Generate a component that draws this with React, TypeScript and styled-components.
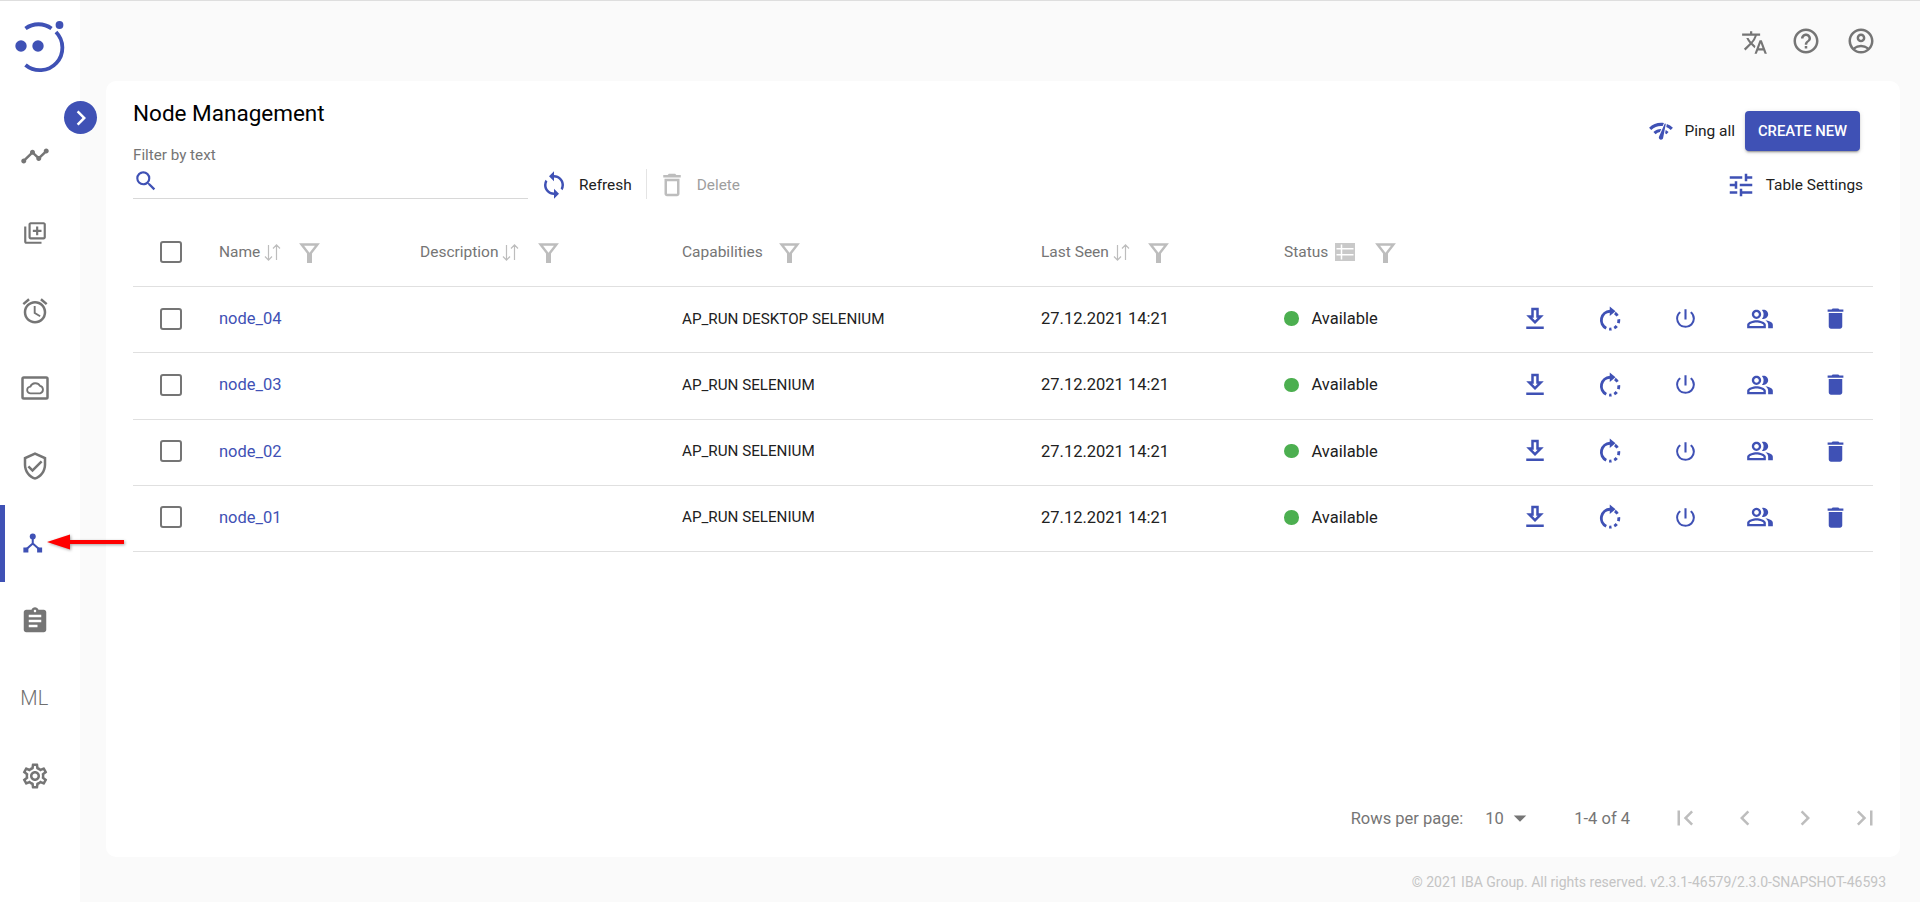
import React from "react";
import styled, { createGlobalStyle, css } from "styled-components";
import {
  MdTranslate, MdHelpOutline, MdOutlineAccountCircle, MdTimeline, MdOutlineLibraryAdd, MdAccessAlarm,
  MdOutlineVerifiedUser, MdAssignment, MdOutlineSettings, MdChevronRight, MdChevronLeft,
  MdFirstPage, MdLastPage, MdSearch, MdSync, MdDeleteOutline, MdNetworkCheck, MdTune,
  MdPowerSettingsNew, MdOutlinePeopleAlt, MdDelete, MdArrowDropDown,
} from "react-icons/md";

const BLUE = "#3f51b5";
const GREY = "#757575";
const LIGHT = "#bdbdbd";
const COLUMNS = "86px 201px 262px 359px 243px 213.5px repeat(5, 75px)";

const Global = createGlobalStyle`
  html, body { margin: 0; padding: 0; background: #fafafa; }
  body { font-family: Roboto, "Liberation Sans", sans-serif; color: #212121; }
  * { box-sizing: border-box; }
`;

const Page = styled.div`
  display: flex; width: 1920px; height: 902px; border-top: 1px solid #dedede; overflow: hidden; background: #fafafa;
`;
const Sidebar = styled.aside`
  position: relative; flex: 0 0 80px; background: #fff; display: flex; flex-direction: column;
`;
const LogoBox = styled.div`
  height: 116px; padding: 10px 0 0 0; display: block;
`;
const ExpandButton = styled.button`
  position: absolute; left: 64px; top: 100px; width: 33px; height: 33px; border: 0; padding: 0; border-radius: 50%;
  background: ${BLUE}; color: #fff; display: flex; align-items: center; justify-content: center; font-size: 30px; z-index: 2;
`;
const NavItem = styled.div<{ $active?: boolean; $size?: number }>`
  position: relative; height: 77.5px; display: flex; align-items: center; justify-content: center; padding-right: 10px;
  color: ${GREY}; font-size: ${(p) => p.$size ?? 30}px;
  ${(p) => p.$active && css`
    color: ${BLUE};
    &::before { content: ""; position: absolute; left: 0; top: 0; bottom: 0; width: 5px; background: ${BLUE}; }
  `}
`;
const NavText = styled.span`
  font-size: 20px; font-weight: 300; line-height: 1; color: #6f6f6f; letter-spacing: 0.3px; margin-right: 1px;
`;
const ArrowMark = styled.svg`
  position: absolute; left: 45px; top: 529px; width: 84px; height: 24px; filter: drop-shadow(1px 1px 1.5px rgba(0,0,0,.35));
`;
const Main = styled.main`
  flex: 1; display: flex; flex-direction: column; min-width: 0;
`;
const TopBar = styled.header`
  height: 80px; display: flex; align-items: center; justify-content: flex-end; padding: 0 44px 0 0; gap: 25px;
  color: ${GREY}; font-size: 30px;
`;
const TranslateIcon = styled(MdTranslate)`
  font-size: 27px; margin-right: -2px; margin-top: 2px;
`;
const Card = styled.section`
  margin: 0 20px 0 26px; height: 776px; background: #fff; border-radius: 10px; padding: 0 27px;
  display: flex; flex-direction: column;
`;
const Toolbar = styled.div`
  height: 135px; display: flex; justify-content: space-between; margin-right: 10px;
`;
const ToolLeft = styled.div`
  display: flex; flex-direction: column;
`;
const Title = styled.h1`
  margin: 16px 0 0; font-size: 22.5px; line-height: 32px; font-weight: 400; color: #000;
`;
const FilterRow = styled.div`
  display: flex; align-items: flex-end; margin-top: 18px;
`;
const FilterField = styled.div`
  width: 395px; display: flex; flex-direction: column;
`;
const FilterLabel = styled.label`
  font-size: 15.2px; line-height: 16px; color: ${GREY};
`;
const SearchLine = styled.div`
  height: 36px; border-bottom: 1px solid #d8d8d8; display: flex; align-items: center; color: ${BLUE}; font-size: 26px;
`;
const ToolButton = styled.div<{ $disabled?: boolean }>`
  display: flex; align-items: center; height: 28px; gap: 10px; font-size: 15.4px;
  color: ${(p) => (p.$disabled ? "#9e9e9e" : "#212121")};
  svg { font-size: 30px; flex: none; color: ${(p) => (p.$disabled ? LIGHT : BLUE)}; }
`;
const ToolDivider = styled.div`
  width: 1px; height: 30px; background: #e4e4e4; margin: 0 10px 0 14px; align-self: flex-end;
`;
const RefreshSlot = styled.div`
  margin-left: 11px;
`;
const ToolRight = styled.div`
  display: flex; flex-direction: column; align-items: flex-end;
`;
const PingRow = styled.div`
  display: flex; align-items: center; margin-top: 30px; height: 40px; margin-right: 3px; font-size: 15.5px;
`;
const PingLabel = styled.div`
  display: flex; align-items: center; gap: 10px;
  svg { font-size: 26px; color: ${BLUE}; }
`;
const CreateButton = styled.button`
  margin-left: 10px; width: 115px; height: 40px; border: 0; border-radius: 4px; background: ${BLUE}; color: #fff;
  font: 500 14.8px Roboto, sans-serif; text-transform: uppercase; padding: 0;
  box-shadow: 0 3px 1px -2px rgba(0,0,0,.2), 0 2px 2px 0 rgba(0,0,0,.14), 0 1px 5px 0 rgba(0,0,0,.12);
`;
const SettingsButton = styled(ToolButton)`
  margin-top: 20px;
`;
const Row = styled.div<{ $head?: boolean }>`
  display: grid; grid-template-columns: ${COLUMNS}; align-items: center; border-bottom: 1px solid #e0e0e0;
  height: ${(p) => (p.$head ? "71px" : "66.25px")};
  padding: ${(p) => (p.$head ? "2px 0 0" : "0 0 2px")};
  font-size: 16.5px; color: #212121;
`;
const CheckCell = styled.div`
  display: flex; padding-left: 27px;
`;
const Check = styled.span`
  width: 22px; height: 22px; border: 2.5px solid ${GREY}; border-radius: 3px; display: block;
`;
const HeadCell = styled.div`
  display: flex; align-items: center; color: ${GREY}; font-size: 15.5px;
`;
const SortIcon = styled.svg`
  width: 21px; height: 21px; margin-left: 2px; color: ${LIGHT};
`;
const ColumnsIcon = styled.svg`
  width: 20px; height: 18px; margin-left: 7px;
`;
const FilterIcon = styled.svg<{ $gap: number }>`
  width: 25px; height: 25px; margin-left: ${(p) => p.$gap}px; color: ${LIGHT};
`;
const NodeLink = styled.a`
  color: ${BLUE};
`;
const Capability = styled.div`
  font-size: 15.2px;
`;
const StatusCell = styled.div`
  display: flex; align-items: center; gap: 13px;
`;
const Dot = styled.span`
  width: 14.5px; height: 14.5px; border-radius: 50%; background: #4caf50;
`;
const ActionCell = styled.div<{ $size?: number }>`
  display: flex; justify-content: center; align-items: center; height: 30px; color: ${BLUE}; font-size: ${(p) => p.$size ?? 30}px;
`;
const Pagination = styled.div`
  margin-top: auto; height: 78px; margin-right: -22px; display: flex; align-items: center; justify-content: flex-end;
  font-size: 16.5px; color: ${GREY};
`;
const PerPage = styled.div`
  display: flex; align-items: center; margin-right: 39.5px;
  svg { font-size: 30px; }
`;
const PerPageValue = styled.span`
  margin: 0 1px 0 22px;
`;
const RangeText = styled.span`
  margin-right: 25px;
`;
const PageButton = styled.span`
  width: 60px; display: flex; justify-content: center; color: ${LIGHT}; font-size: 30px;
`;
const Footer = styled.footer`
  flex: 1; display: flex; justify-content: flex-end; align-items: center; padding: 4px 34px 0 0;
  font-size: 14px; color: #c4c4c4;
`;

const Logo = () => (
  <svg width="80" height="70" viewBox="0 0 80 70" fill="#3f51b5">
    <circle cx="21" cy="35" r="5.7" />
    <circle cx="38" cy="35" r="5.7" />
    <circle cx="59.5" cy="14" r="3.9" />
    <path d="M25.5 17.5 A22 22 0 0 1 51.5 17.5" fill="none" stroke="#3f51b5" strokeWidth="3.8" />
    <path d="M56 21 A22.5 22.5 0 0 1 25.5 54" fill="none" stroke="#3f51b5" strokeWidth="3.8" />
  </svg>
);

const CloudFrameIcon = () => (
  <svg width="30" height="30" viewBox="0 0 24 24" fill="none" stroke="currentColor">
    <rect x="2" y="3.6" width="20" height="16.8" rx="1" strokeWidth="2" />
    <path d="M8.6 16.3a2.7 2.7 0 0 1-.3-5.4A4.3 4.3 0 0 1 16 10.3a3.1 3.1 0 0 1 .1 6Z" strokeWidth="1.5" />
  </svg>
);

const NodeIcon = () => (
  <svg width="30" height="30" viewBox="0 0 24 24" fill="currentColor">
    <circle cx="10.2" cy="6.8" r="2.4" />
    <rect x="2.7" y="15.6" width="4" height="4" />
    <rect x="13.7" y="15.6" width="4" height="4" />
    <path d="M10.2 8.5V12.4L5 17M10.2 12.4L15.4 17" fill="none" stroke="currentColor" strokeWidth="1.6" />
  </svg>
);

const DownloadIcon = () => (
  <svg width="30" height="30" viewBox="0 0 24 24" fill="currentColor">
    <path d="M13 5v6h1.17L12 13.17 9.83 11H11V5h2m2-2H9v6H5l7 7 7-7h-4V3zm4 15H5v2h14v-2z" />
  </svg>
);

const RebootIcon = () => (
  <svg width="30" height="30" viewBox="0 0 24 24" fill="none" stroke="currentColor" strokeWidth="2.3">
    <path d="M12 5.8A7.2 7.2 0 0 0 9 19.4" />
    <path d="M11.8 2L16.4 5.8 11.8 9.6Z" fill="currentColor" stroke="none" />
    <path d="M15.9 7.2A7.2 7.2 0 0 1 18 9.4M19 12.2A7.2 7.2 0 0 1 18.7 15.3M17.4 17.6A7.2 7.2 0 0 1 15.4 19.3M13.2 20A7.2 7.2 0 0 1 11.3 20.1" />
  </svg>
);

const Sort = () => (
  <SortIcon viewBox="0 0 21 21" fill="none" stroke="currentColor" strokeWidth="1.2">
    <path d="M6.5 3V18M3 14.5L6.5 18.2 10 14.5M14.5 18V3M11 6.5L14.5 2.8 18 6.5" />
  </SortIcon>
);

const Funnel = ({ gap }: { gap: number }) => (
  <FilterIcon $gap={gap} viewBox="0 0 24 24" fill="currentColor">
    <path fillRule="evenodd" d="M2 3H22L14.4 13V22H9.6V13ZM6.8 5.4L12 12.2 17.2 5.4Z" />
  </FilterIcon>
);

const Columns = () => (
  <ColumnsIcon viewBox="0 0 20 18">
    <rect width="20" height="18" fill="#c9c9c9" />
    <path d="M1.5 5.8H18.5M1.5 11.8H18.5M6.5 1.5V16.5" fill="none" stroke="#fff" strokeWidth="1.5" />
  </ColumnsIcon>
);

const rows = [
  { name: "node_04", caps: "AP_RUN DESKTOP SELENIUM" },
  { name: "node_03", caps: "AP_RUN SELENIUM" },
  { name: "node_02", caps: "AP_RUN SELENIUM" },
  { name: "node_01", caps: "AP_RUN SELENIUM" },
];

export default function App() {
  return (
    <>
      <Global />
      <Page>
        <Sidebar>
          <LogoBox><Logo /></LogoBox>
          <ExpandButton aria-label="Expand"><MdChevronRight /></ExpandButton>
          <NavItem><MdTimeline /></NavItem>
          <NavItem $size={26}><MdOutlineLibraryAdd /></NavItem>
          <NavItem><MdAccessAlarm /></NavItem>
          <NavItem><CloudFrameIcon /></NavItem>
          <NavItem><MdOutlineVerifiedUser /></NavItem>
          <NavItem $active><NodeIcon /></NavItem>
          <NavItem><MdAssignment /></NavItem>
          <NavItem><NavText>ML</NavText></NavItem>
          <NavItem><MdOutlineSettings /></NavItem>
          <ArrowMark viewBox="0 0 84 24">
            <path d="M2 12L25 4.5V10H79V14H25V19.5Z" fill="#ff0000" />
          </ArrowMark>
        </Sidebar>
        <Main>
          <TopBar>
            <TranslateIcon />
            <MdHelpOutline />
            <MdOutlineAccountCircle />
          </TopBar>
          <Card>
            <Toolbar>
              <ToolLeft>
                <Title>Node Management</Title>
                <FilterRow>
                  <FilterField>
                    <FilterLabel>Filter by text</FilterLabel>
                    <SearchLine><MdSearch /></SearchLine>
                  </FilterField>
                  <RefreshSlot>
                    <ToolButton><MdSync />Refresh</ToolButton>
                  </RefreshSlot>
                  <ToolDivider />
                  <ToolButton $disabled><MdDeleteOutline />Delete</ToolButton>
                </FilterRow>
              </ToolLeft>
              <ToolRight>
                <PingRow>
                  <PingLabel><MdNetworkCheck />Ping all</PingLabel>
                  <CreateButton>Create new</CreateButton>
                </PingRow>
                <SettingsButton><MdTune />Table Settings</SettingsButton>
              </ToolRight>
            </Toolbar>
            <Row $head>
              <CheckCell><Check /></CheckCell>
              <HeadCell>Name<Sort /><Funnel gap={14} /></HeadCell>
              <HeadCell>Description<Sort /><Funnel gap={15} /></HeadCell>
              <HeadCell>Capabilities<Funnel gap={14} /></HeadCell>
              <HeadCell>Last Seen<Sort /><Funnel gap={14} /></HeadCell>
              <HeadCell>Status<Columns /><Funnel gap={18} /></HeadCell>
            </Row>
            {rows.map((r) => (
              <Row key={r.name}>
                <CheckCell><Check /></CheckCell>
                <NodeLink>{r.name}</NodeLink>
                <div />
                <Capability>{r.caps}</Capability>
                <div>27.12.2021 14:21</div>
                <StatusCell><Dot />Available</StatusCell>
                <ActionCell><DownloadIcon /></ActionCell>
                <ActionCell><RebootIcon /></ActionCell>
                <ActionCell $size={25}><MdPowerSettingsNew /></ActionCell>
                <ActionCell $size={28}><MdOutlinePeopleAlt /></ActionCell>
                <ActionCell $size={27}><MdDelete /></ActionCell>
              </Row>
            ))}
            <Pagination>
              <PerPage>
                Rows per page:
                <PerPageValue>10</PerPageValue>
                <MdArrowDropDown />
              </PerPage>
              <RangeText>1-4 of 4</RangeText>
              <PageButton><MdFirstPage /></PageButton>
              <PageButton><MdChevronLeft /></PageButton>
              <PageButton><MdChevronRight /></PageButton>
              <PageButton><MdLastPage /></PageButton>
            </Pagination>
          </Card>
          <Footer>© 2021 IBA Group. All rights reserved. v2.3.1-46579/2.3.0-SNAPSHOT-46593</Footer>
        </Main>
      </Page>
    </>
  );
}
